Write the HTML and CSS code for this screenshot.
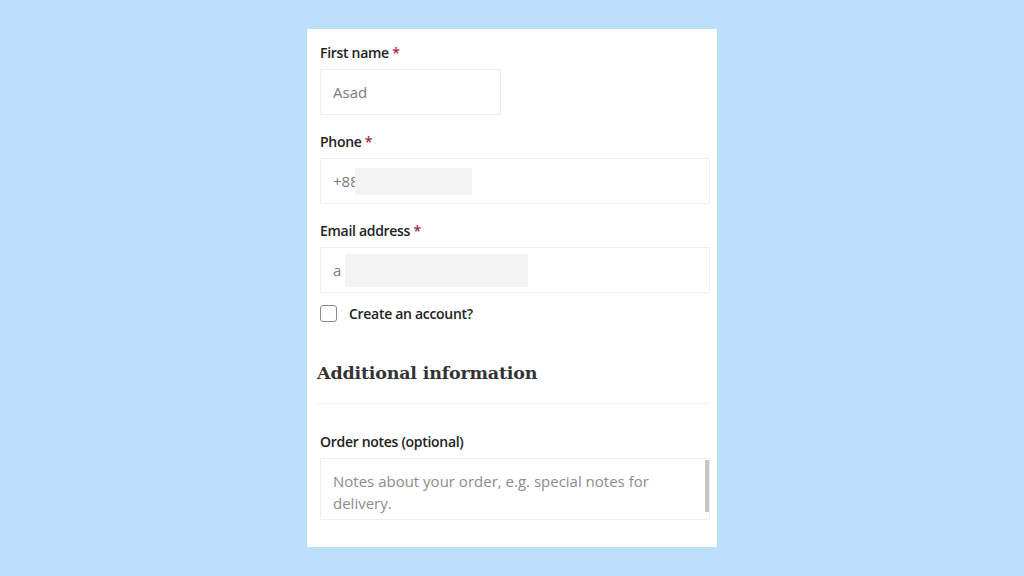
FILE: index.html
```html
<!DOCTYPE html>
<html>
<head>
    <title>Checkout - Billing details</title>
    <link rel="stylesheet" href="styles.css">
</head>
<body>

<div class="card">
    <form class="checkout">
        <div class="field">
            <label for="firstName">First name <span class="required">*</span></label>
            <input type="text" id="firstName" class="input short" value="Asad">
        </div>

        <div class="field">
            <label for="phone">Phone <span class="required">*</span></label>
            <div class="input-wrap">
                <input type="text" id="phone" class="input" value="+880">
                <span class="redact redact-phone"></span>
            </div>
        </div>

        <div class="field">
            <label for="email">Email address <span class="required">*</span></label>
            <div class="input-wrap">
                <input type="text" id="email" class="input" value="a">
                <span class="redact redact-email"></span>
            </div>
        </div>

        <label class="check-row">
            <span class="checkbox"></span>
            Create an account?
        </label>

        <h3 class="section-title">Additional information</h3>

        <div class="field">
            <label for="notes">Order notes (optional)</label>
            <div class="input-wrap">
                <textarea id="notes" class="input notes" placeholder="Notes about your order, e.g. special notes for delivery."></textarea>
                <span class="scroll-thumb"></span>
            </div>
        </div>
    </form>
</div>

</body>
</html>
```

FILE: styles.css
```css
html, body {
    margin: 0;
    height: 100%;
}
body {
    background-color: #bbdff8;
    font-family: "Open Sans", Arial, sans-serif;
    color: #2b2b2b;
    display: flex;
    justify-content: center;
    padding-top: 29px;
    box-sizing: border-box;
}
.card {
    width: 410px;
    height: 518px;
    background-color: #fff;
    padding: 14px 7px 0 13px;
    box-sizing: border-box;
}
.checkout {
    display: flex;
    flex-direction: column;
}
.field {
    display: flex;
    flex-direction: column;
    margin-bottom: 17px;
}
.field label {
    font-size: 14px;
    font-weight: 600;
    line-height: 20px;
    letter-spacing: -0.3px;
    margin-bottom: 6px;
    color: #222;
}
.required {
    color: #a8273c;
}
.input {
    font-family: "Open Sans", Arial, sans-serif;
    font-size: 15px;
    color: #7a7a7a;
    height: 46px;
    padding: 0 12px;
    border: 1px solid #ededed;
    border-radius: 1px;
    box-sizing: border-box;
    width: 100%;
    background: #fff;
    outline: none;
}
.input.short {
    width: 181px;
}
.input-wrap {
    position: relative;
}
.redact {
    position: absolute;
    background-color: #f3f3f3;
}
.redact-phone {
    left: 35px;
    top: 10px;
    width: 117px;
    height: 27px;
}
.redact-email {
    left: 25px;
    top: 7px;
    width: 183px;
    height: 33px;
}
.check-row {
    display: flex;
    align-items: center;
    font-size: 14px;
    font-weight: 600;
    letter-spacing: -0.3px;
    color: #222;
    margin-top: -6px;
    height: 18px;
}
.checkbox {
    width: 15px;
    height: 15px;
    border: 1px solid #8a8a8a;
    border-radius: 3px;
    margin-right: 12px;
}
.section-title {
    font-family: "DejaVu Serif", "Liberation Serif", serif;
    font-size: 17.5px;
    font-weight: 700;
    letter-spacing: -0.2px;
    color: #333;
    margin: 37px 0 0 -3px;
    line-height: 28px;
    padding-bottom: 16px;
    border-bottom: 1px solid #efefef;
}
.section-title + .field {
    margin-top: 28px;
}
.notes {
    height: 62px;
    padding: 11px 12px 0;
    line-height: 22px;
    resize: none;
    display: block;
}
.notes::placeholder {
    color: #8c8c8c;
}
.scroll-thumb {
    position: absolute;
    right: 1px;
    top: 2px;
    width: 4px;
    height: 52px;
    background-color: #c6c6c6;
}
```
